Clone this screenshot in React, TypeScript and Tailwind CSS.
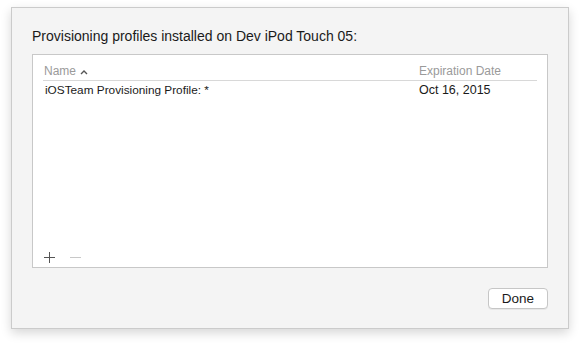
import React from "react";

export default function App() {
  return (
    <div className="w-[580px] h-[344px] bg-white pt-[7px] pl-[11px]" style={{ fontFamily: '"Liberation Sans", Arial, sans-serif' }}>
      <div className="w-[558px] h-[322px] bg-[#f4f4f4] border border-[#cbcbcb] shadow-[0_4px_10px_rgba(0,0,0,0.16)] flex flex-col pl-[20px] pr-[20px]">
        <div className="pt-[20px] h-[46px] text-[14px] text-[#1a1a1a] leading-[17px]">
          Provisioning profiles installed on Dev iPod Touch 05:
        </div>
        <div className="h-[214px] bg-white border border-[#c8c8c8] flex flex-col px-[10px]">
          <div className="flex items-end h-[26px] border-b border-[#d8d8d8] text-[12px] text-[#9a9a9a] pb-[1px] leading-[15px]">
            <div className="flex-1 pl-[1px] flex items-center gap-[4px]">
              Name
              <svg width="8" height="6" viewBox="0 0 8 6" className="mt-[1px]">
                <path d="M1 5 L4 2 L7 5" fill="none" stroke="#555" strokeWidth="1.4" />
              </svg>
            </div>
            <div className="w-[118px]">Expiration Date</div>
          </div>
          <div className="flex h-[19px] items-center text-[#1a1a1a]">
            <div className="flex-1 pl-[2px] text-[11.8px]">iOSTeam Provisioning Profile: *</div>
            <div className="w-[118px] text-[12.5px]">Oct 16, 2015</div>
          </div>
          <div className="flex-1" />
          <div className="flex items-center gap-[15px] h-[18px] mb-[1px] pl-[1px]">
            <svg width="11" height="11" viewBox="0 0 11 11">
              <path d="M5.5 0 V11 M0 5.5 H11" stroke="#555" strokeWidth="1" />
            </svg>
            <svg width="11" height="11" viewBox="0 0 11 11">
              <path d="M0 5.5 H11" stroke="#c8c8c8" strokeWidth="1" />
            </svg>
          </div>
        </div>
        <div className="flex justify-end mt-[20px]">
          <button className="w-[60px] h-[21px] bg-white border border-[#c6c6c6] rounded-[4px] text-[13.5px] text-[#1a1a1a] shadow-[0_1px_0_rgba(0,0,0,0.05)] leading-none">
            Done
          </button>
        </div>
      </div>
    </div>
  );
}
